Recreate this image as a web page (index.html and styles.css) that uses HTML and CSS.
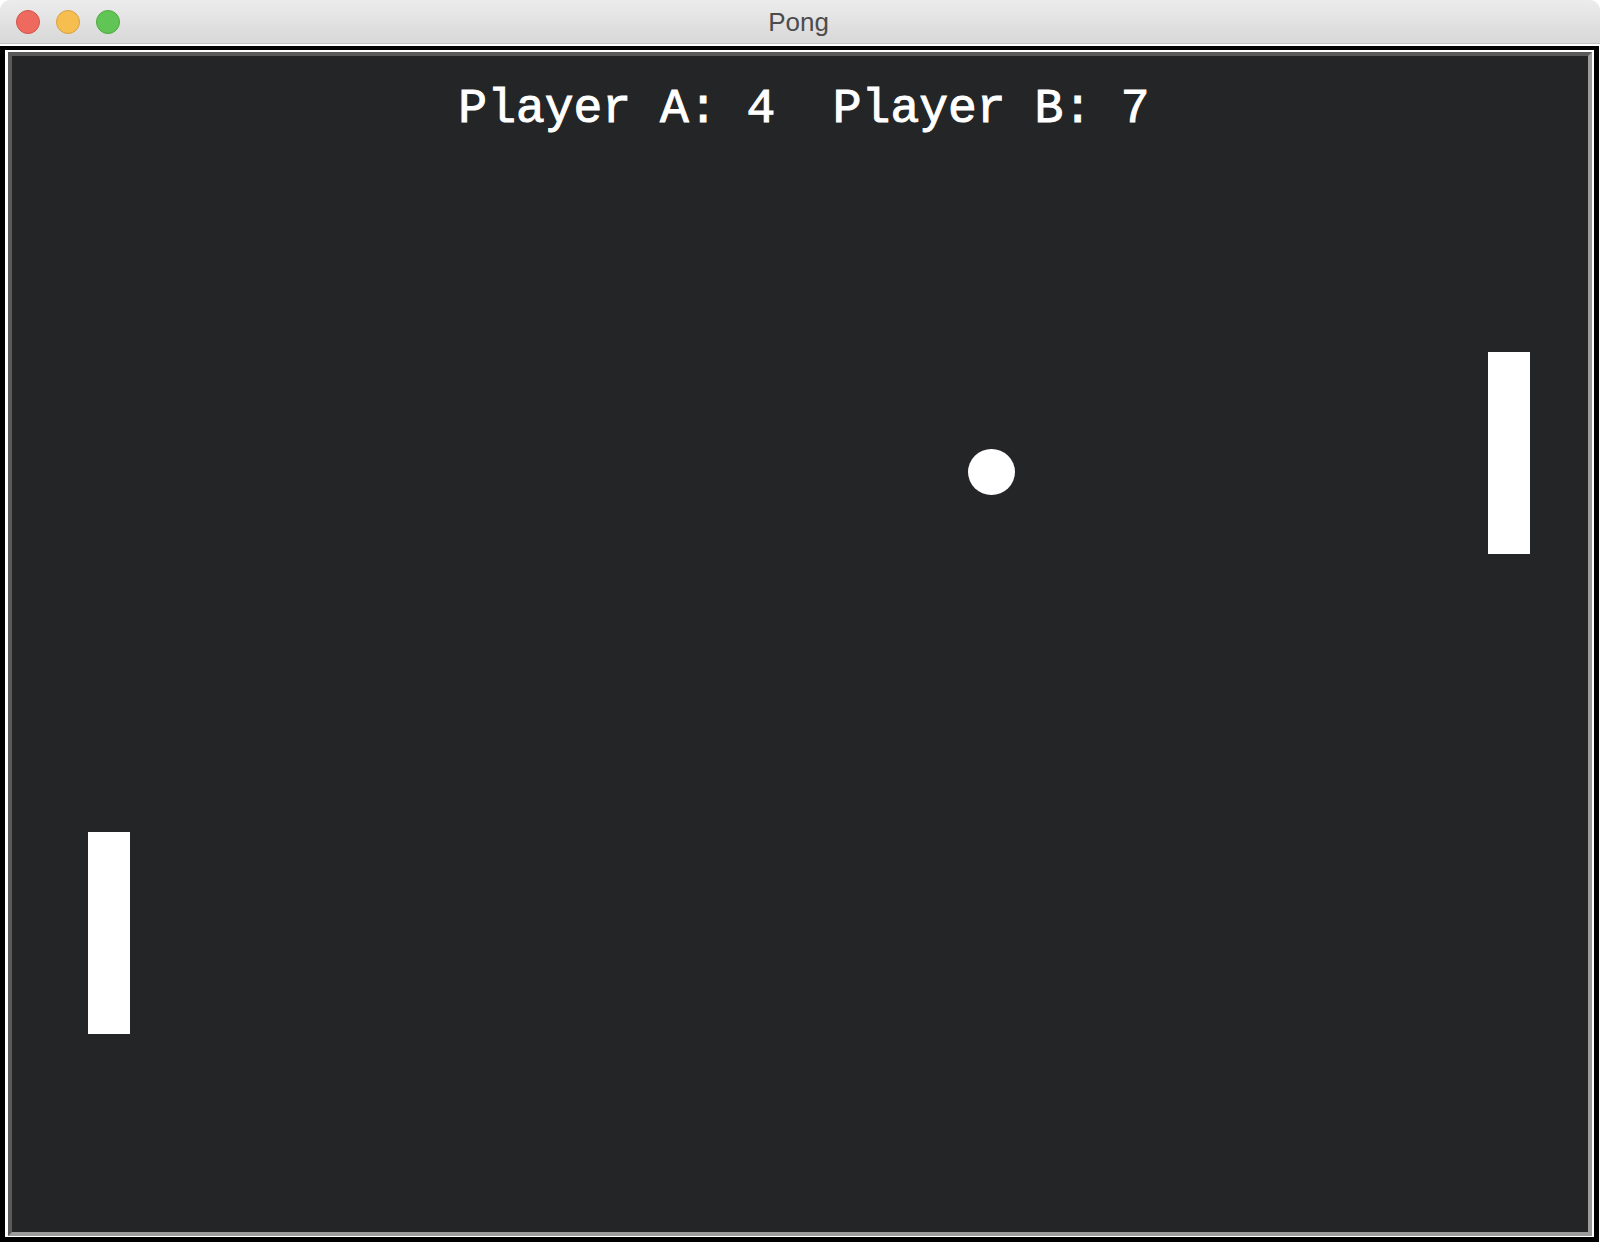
FILE: index.html
```html
<!DOCTYPE html>
<html>
<head>
<meta charset="utf-8">
<title>Pong</title>
<link rel="stylesheet" href="styles.css">
</head>
<body>
<div class="window">
  <div class="titlebar">
    <div class="lights">
      <span class="light red"></span>
      <span class="light yellow"></span>
      <span class="light green"></span>
    </div>
    <div class="title">Pong</div>
  </div>
  <div class="body">
    <div class="frame">
      <div class="canvas">
        <div class="score">Player A: 4&nbsp;&nbsp;Player B: 7</div>
        <div class="paddle paddle-right"></div>
        <div class="paddle paddle-left"></div>
        <div class="ball"></div>
      </div>
    </div>
  </div>
</div>
</body>
</html>
```
FILE: styles.css
```css
html, body {
  margin: 0;
  padding: 0;
  background: #ffffff;
}
.window {
  width: 1600px;
  height: 1244px;
  display: flex;
  flex-direction: column;
  background: #ffffff;
}
.titlebar {
  position: relative;
  height: 43px;
  flex: none;
  border-bottom: 1px solid #c2c2c2;
  border-radius: 10px 10px 0 0;
  background: linear-gradient(#ececec, #d8d8d8);
  display: flex;
  align-items: center;
  justify-content: center;
}
.lights {
  position: absolute;
  left: 16px;
  top: 10px;
  display: flex;
  gap: 16px;
}
.light {
  width: 22px;
  height: 22px;
  border-radius: 50%;
  border: 1px solid;
}
.red { background: #ee6a5f; border-color: #d4534a; }
.yellow { background: #f5be4f; border-color: #d6a243; }
.green { background: #61c555; border-color: #4fa83e; }
.title {
  font-family: "Liberation Sans", Arial, sans-serif;
  font-size: 26px;
  color: #4c4c4c;
  margin-top: 2px;
  margin-right: 3px;
}
.body {
  flex: 1;
  display: flex;
  padding: 2px 1px 2px 0;
}
.frame {
  flex: 1;
  display: flex;
  border-style: solid;
  border-color: #000000;
  border-width: 4px 5px 5px 5px;
  padding: 2px 2px 1px 3px;
  background: #ffffff;
}
.canvas {
  flex: 1;
  position: relative;
  overflow: hidden;
  background: #242527;
  border-style: solid;
  border-width: 4px;
  border-color: #5a5a5a #9c9c9c #9c9c9c #5a5a5a;
}
.score {
  position: absolute;
  left: 8px;
  right: 0;
  top: 26px;
  text-align: center;
  font-family: "Liberation Mono", "Courier New", monospace;
  font-size: 48px;
  line-height: 54px;
  color: #ffffff;
  -webkit-text-stroke: 1px #ffffff;
  white-space: pre;
}
.paddle {
  position: absolute;
  width: 42px;
  height: 202px;
  background: #ffffff;
}
.paddle-right { left: 1476px; top: 296px; }
.paddle-left { left: 76px; top: 776px; }
.ball {
  position: absolute;
  left: 956px;
  top: 393px;
  width: 47px;
  height: 46px;
  border-radius: 50%;
  background: #ffffff;
}
```
